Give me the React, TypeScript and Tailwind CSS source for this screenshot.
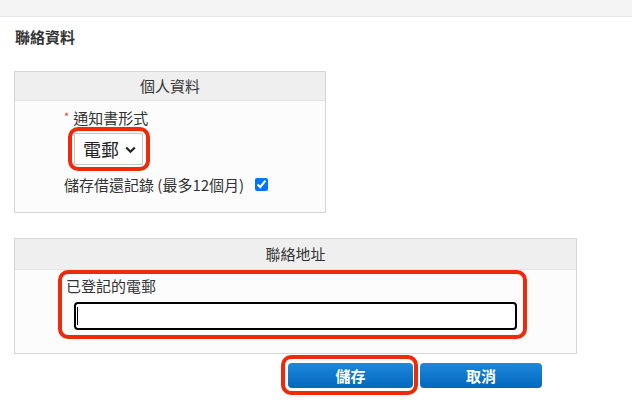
import React from "react";

const font = { fontFamily: '"Noto Sans CJK TC", "Noto Sans", sans-serif' };

export default function App() {
  return (
    <div className="w-[632px] h-[416px] bg-white text-[#333] overflow-hidden" style={font}>
      <div className="h-[17px] bg-[#f4f4f4] border-b border-[#e6e6e6]" />
      <div className="pl-[15px] pt-[10px] text-[15px] leading-[20px] font-bold text-[#333]">聯絡資料</div>

      {/* 個人資料 */}
      <div className="ml-[14px] mt-[24px] w-[312px] border border-[#d6d6d6] bg-[#fcfcfc]">
        <div className="h-[29px] bg-[#efefef] border-b border-[#e4e4e4] flex items-center justify-center text-[15px]">
          個人資料
        </div>
        <div className="pl-[49px] pt-[7px] pb-[17px]">
          <div className="flex items-center h-[20px] text-[15px] leading-[20px]">
            <span className="text-[#e53935] text-[11px] mr-[4px] -mt-[4px]">*</span>
            <span>通知書形式</span>
          </div>
          <div className="mt-[-1px] ml-[4px] w-[82px] h-[44px] border-4 border-[#f0290c] rounded-[10px] p-[2px]">
            <div className="w-[69px] h-[32px] bg-white border border-[#c9c9c9] flex items-center pl-[8px] pr-[6px] justify-between">
              <span className="text-[18px] leading-[22px] text-[#222]">電郵</span>
              <svg width="11" height="8" viewBox="0 0 11 8" className="mt-[1px]">
                <path d="M1.2 1.5 L5.5 5.8 L9.8 1.5" fill="none" stroke="#222" strokeWidth="2.2" />
              </svg>
            </div>
          </div>
          <div className="mt-[4px] flex items-center h-[20px] text-[15px] leading-[20px]">
            <span>儲存借還記錄 (最多12個月)</span>
            <input type="checkbox" defaultChecked className="ml-[11px] w-[13px] h-[13px] mt-[-2px]" />
          </div>
        </div>
      </div>

      {/* 聯絡地址 */}
      <div className="ml-[14px] mt-[25px] w-[563px] border border-[#d6d6d6] bg-[#fcfcfc]">
        <div className="h-[31px] bg-[#efefef] border-b border-[#e4e4e4] flex items-center justify-center text-[15px]">
          聯絡地址
        </div>
        <div className="pl-[43px] pt-[0px] pb-[14px]">
          <div className="w-[469px] h-[69px] border-4 border-[#f0290c] rounded-[10px] pl-[4px] pt-[2px]">
            <div className="text-[15px] leading-[20px]">已登記的電郵</div>
            <div className="mt-[6px] ml-[8px] w-[443px] h-[28px] bg-white border-2 border-black rounded-[4px] flex items-center pl-[1px]">
              <div className="w-[1px] h-[18px] bg-black" />
            </div>
          </div>
        </div>
      </div>

      {/* buttons */}
      <div className="ml-[281px] mt-[1px] flex items-center">
        <div className="w-[137px] h-[40px] border-4 border-[#f0290c] rounded-[10px] pl-[3px] pt-[4px]">
          <button className="w-[125px] h-[25px] rounded-[4px] bg-gradient-to-b from-[#1e88db] to-[#0068bd] text-white font-bold text-[15px] leading-[25px]" style={font}>
            儲存
          </button>
        </div>
        <button className="ml-[2px] w-[122px] h-[25px] rounded-[4px] bg-gradient-to-b from-[#1e88db] to-[#0068bd] text-white font-bold text-[15px] leading-[25px]" style={font}>
          取消
        </button>
      </div>
    </div>
  );
}
